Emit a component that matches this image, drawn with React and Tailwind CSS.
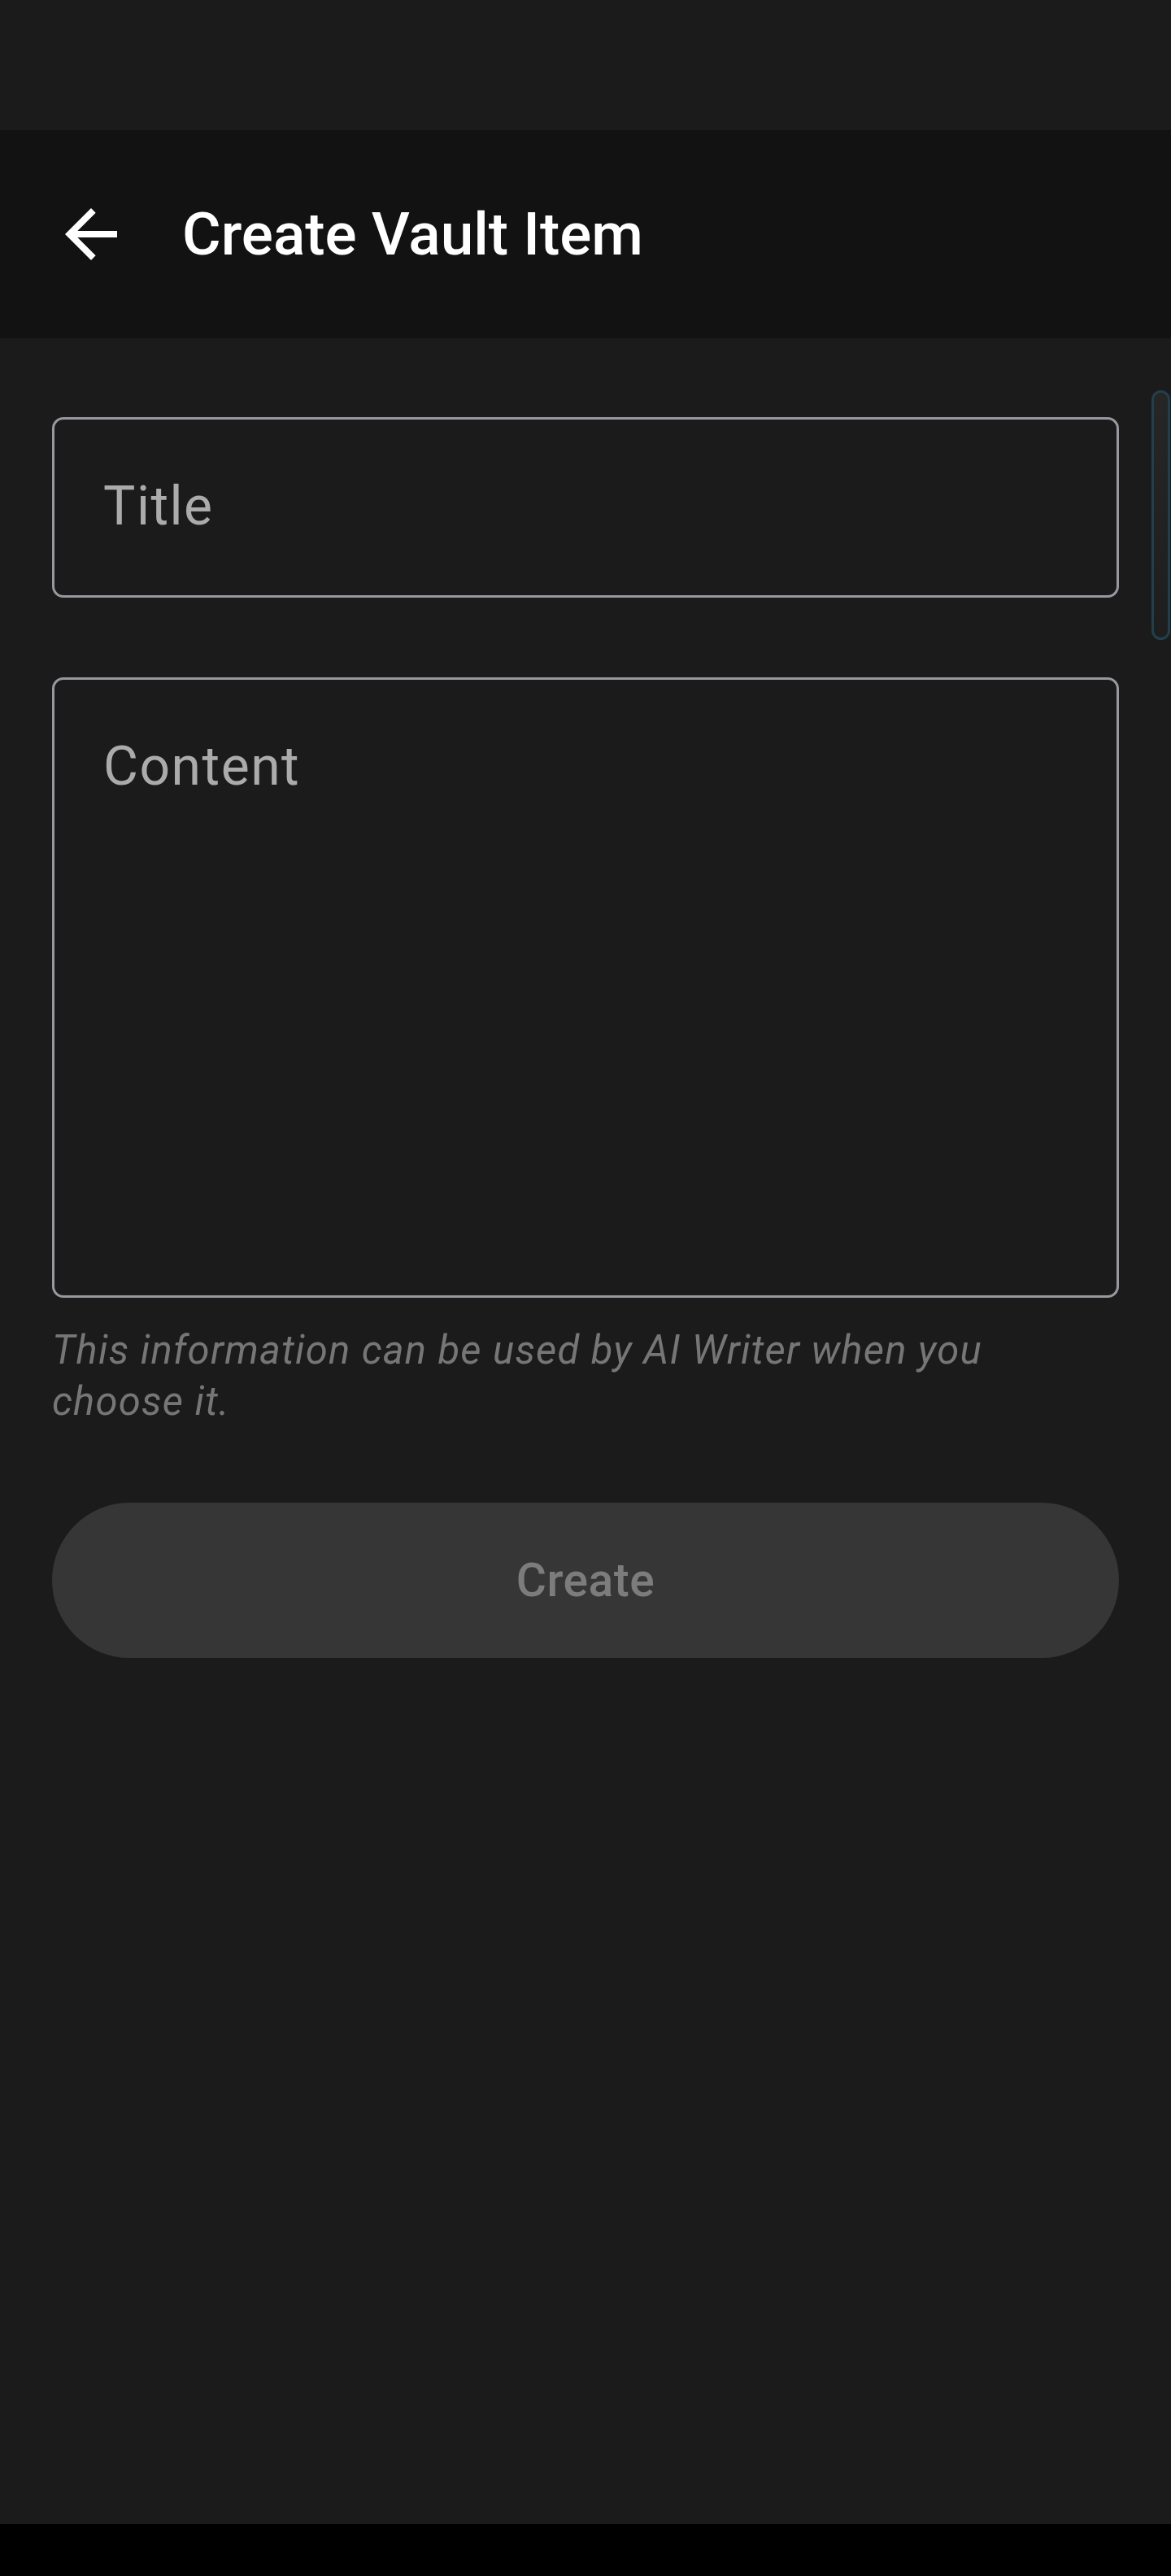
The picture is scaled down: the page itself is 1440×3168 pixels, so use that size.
import React from 'react'

function BackArrow() {
  return (
    <svg viewBox="0 0 24 24" className="w-[96px] h-[96px]" fill="#ffffff">
      <path d="M20 11H7.83l5.59-5.59L12 4l-8 8 8 8 1.41-1.41L7.83 13H20v-2z" />
    </svg>
  )
}

export default function App() {
  return (
    <div
      className="relative flex flex-col h-[3168px] w-full bg-[#1b1b1b] overflow-hidden"
      style={{ fontFamily: 'Roboto, "Noto Sans", sans-serif' }}
    >
      {/* Status bar */}
      <div className="h-[160px] bg-[#1b1b1b]" />

      {/* Top app bar */}
      <header className="h-[256px] bg-[#121212] flex items-center pl-[64px]">
        <BackArrow />
        <h1 className="ml-[64px] text-[73px] font-medium text-white leading-none">
          Create Vault Item
        </h1>
      </header>

      {/* Form */}
      <main className="flex-1 flex flex-col px-[64px] pt-[97px]">
        <div className="h-[222px] border-[3px] border-[#9a979e] rounded-[14px] pl-[60px] pt-[73px]">
          <span className="block text-[66px] leading-[67px] text-[#ababab] tracking-[1.5px]">Title</span>
        </div>

        <div className="mt-[98px] h-[763px] border-[3px] border-[#9a979e] rounded-[14px] pl-[60px] pt-[73px]">
          <span className="block text-[66px] leading-[67px] text-[#ababab] tracking-[1.5px]">Content</span>
        </div>

        <p className="mt-[33px] text-[49px] leading-[63px] italic text-[#767676] tracking-[1.2px]">
          This information can be used by AI Writer when you
          <br />
          choose it.
        </p>

        <button className="mt-[93px] h-[191px] w-full rounded-full bg-[#363636] flex items-center justify-center">
          <span className="text-[57px] font-medium text-[#7c7c7c] tracking-[0.5px]">Create</span>
        </button>
      </main>

      {/* Navigation bar */}
      <div className="h-[64px] bg-black" />

      {/* Scroll indicator */}
      <div className="absolute right-[1px] top-[480px] w-[23px] h-[307px] rounded-full border-[3px] border-[#233f4c] bg-gradient-to-b from-[#262626] to-[#1e1e1e]" />
    </div>
  )
}
